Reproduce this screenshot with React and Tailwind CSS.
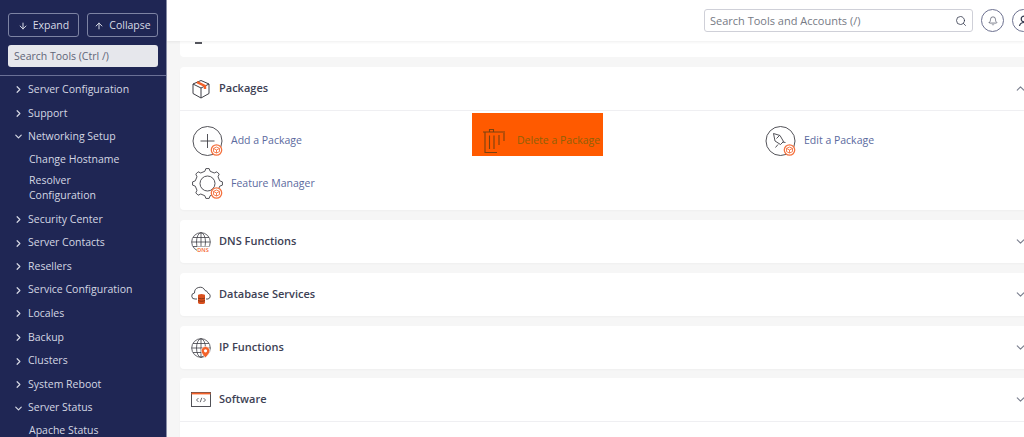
import React from "react";
import { ChevronRight, ChevronDown, ChevronUp, ArrowDown, ArrowUp, Search, Bell } from "lucide-react";

const D = "#3f3f46";
const O = "#f4622a";

function Badge({ x = 24, y = 24 }) {
  return (
    <g transform={`translate(${x} ${y})`} fill="none" stroke="#f4723f" strokeWidth="1.1">
      <circle r="5.2" fill="#fff" strokeWidth="1.3" />
      <path d="M-3 -1.6 0 -3 3 -1.6 3 1.6 0 3 -3 1.6Z M-3 -1.6 0 0 3 -1.6 M0 0V3" strokeWidth="0.9" />
    </g>
  );
}

function Svg({ children, size = 32, box = 32 }) {
  return (
    <svg width={size} height={size} viewBox={`0 0 ${box} ${box}`} fill="none" stroke={D} strokeWidth="0.9" className="shrink-0">
      {children}
    </svg>
  );
}

const AddIcon = () => (
  <Svg>
    <circle cx="15.5" cy="16" r="14.5" />
    <path d="M15.5 9v14M8.500 16h14" />
    <Badge x={24.5} y={25} />
  </Svg>
);

const TrashIcon = () => (
  <svg width="24" height="26" viewBox="0 0 24 26" fill="none" stroke="#7a4210" strokeWidth="1.1" className="shrink-0">
    <path d="M0 4h22M6.500 4V1.500h4V4" />
    <path d="M2 4v20.500h12" />
    <path d="M6.500 7.500v13.500M11 7.500v13.500M16 7v10M21 5v8" />
  </svg>
);

const EditIcon = () => (
  <Svg>
    <circle cx="15.5" cy="16" r="14.5" />
    <path d="M8.500 8.500l6.500 2 3.500 6-3 3-5.500-3.500z M11.500 13.500l3-3M13 19.500l-2.500 3M17.500 17l3 .5" />
    <Badge x={24.5} y={25} />
  </Svg>
);

function gearPath(cx, cy, r1, r2, n) {
  const pts = [];
  for (let i = 0; i < n; i++) {
    const a = (i / n) * Math.PI * 2;
    const s = Math.PI / n;
    [[-0.5, r1], [-0.25, r2], [0.25, r2], [0.5, r1]].forEach(([k, r]) => {
      const t = a + k * s * 1.1;
      pts.push(`${(cx + r * Math.cos(t)).toFixed(2)} ${(cy + r * Math.sin(t)).toFixed(2)}`);
    });
  }
  return "M" + pts.join("L") + "Z";
}

const GearIcon = () => (
  <Svg>
    <path d={gearPath(15.5, 15.5, 12.5, 15, 8)} strokeLinejoin="round" />
    <circle cx="15.5" cy="15.5" r="7.5" />
    <Badge x={24.5} y={25} />
  </Svg>
);

const BoxIcon = () => (
  <svg width="20" height="20" viewBox="0 0 20 20" fill="none" stroke={D} strokeWidth="1" className="shrink-0">
    <path d="M10 1.500 18 5v9.500l-8 4.500-8-4.500V5z" />
    <path d="M2 5l8 4 8-4M10 9v10" />
    <path d="M6 3.200 14 7v3" stroke={O} strokeWidth="2.400" />
  </svg>
);

const GlobeIcon = ({ children }) => (
  <svg width="20" height="20" viewBox="0 0 20 20" fill="none" stroke={D} strokeWidth="0.8" className="shrink-0">
    <circle cx="10" cy="10" r="9.300" />
    <ellipse cx="10" cy="10" rx="4.500" ry="9.300" />
    <path d="M10 .7v18.600M.7 10h18.600M2 5.500h16M2 14.500h16" />
    {children}
  </svg>
);

const CloudIcon = () => (
  <svg width="21" height="20" viewBox="0 0 21 20" fill="none" stroke={D} strokeWidth="0.9" className="shrink-0">
    <path d="M6 14H4a3 3 0 0 1-.5-6A5.500 5.500 0 0 1 14 5.500 3.500 3.500 0 0 1 17 8.200 3 3 0 0 1 17 14h-2" />
    <ellipse cx="10.500" cy="10.500" rx="3.500" ry="1.500" fill="#d9501e" stroke="none" />
    <rect x="7" y="10.500" width="7" height="7" fill="#d9501e" stroke="none" />
    <ellipse cx="10.500" cy="17.500" rx="3.500" ry="1.500" fill="#d9501e" stroke="none" />
    <path d="M7 13c2 1 5 1 7 0M7 15.500c2 1 5 1 7 0" stroke="#6b2a10" strokeWidth="0.7" />
  </svg>
);

const WindowIcon = () => (
  <svg width="20" height="20" viewBox="0 0 20 20" fill="none" stroke={D} strokeWidth="0.9" className="shrink-0">
    <rect x=".5" y="2.500" width="19" height="14" />
    <path d="M.5 3.500h19" stroke={O} strokeWidth="1.800" />
    <path d="M7.500 8 5.500 10l2 2M12.500 8l2 2-2 2M10.800 7.800 9.200 12.200" strokeWidth="0.8" />
  </svg>
);

const items = [
  ["Server Configuration", 0],
  ["Support", 0],
  ["Networking Setup", 1, ["Change Hostname", "Resolver Configuration"]],
  ["Security Center", 0],
  ["Server Contacts", 0],
  ["Resellers", 0],
  ["Service Configuration", 0],
  ["Locales", 0],
  ["Backup", 0],
  ["Clusters", 0],
  ["System Reboot", 0],
  ["Server Status", 1, ["Apache Status"]],
];

function Sidebar() {
  return (
    <aside className="w-[167px] shrink-0 h-full overflow-hidden bg-[#1f2654] border-r border-r-[#8a8fa8]">
      <div className="flex gap-2 px-2 pt-[13px]">
        <button className="flex-1 h-[24px] pt-[1px] flex items-center justify-center gap-[5px] rounded-[3px] border border-[#7d83a3] text-[10.5px] text-[#d8dbe6]">
          <ArrowDown size={10} strokeWidth={2.4} /> Expand
        </button>
        <button className="flex-1 h-[24px] pt-[1px] flex items-center justify-center gap-[5px] rounded-[3px] border border-[#7d83a3] text-[10.5px] text-[#d8dbe6]">
          <ArrowUp size={10} strokeWidth={2.4} /> Collapse
        </button>
      </div>
      <div className="mx-2 mt-[8px] h-[22px] pt-[1px] flex items-center rounded-[3px] bg-[#e6e7ec] px-[6px] text-[10.5px] text-[#5f6577]">
        Search Tools (Ctrl /)
      </div>
      <div className="mt-[8px] border-t border-t-[#6a7096] pt-[2px]">
        {items.map(([label, open, subs]) => (
          <div key={label}>
            <div className="h-[23.6px] flex items-center pl-[13px] gap-[4px] text-[10.5px] text-[#d4d7e3]">
              {open ? <ChevronDown size={11} strokeWidth={2.6} /> : <ChevronRight size={11} strokeWidth={2.6} />}
              <span>{label}</span>
            </div>
            {subs && (
              <div className="pt-[1px] pb-[1px]">
                {subs.map((s) => (
                  <div key={s} className="pl-[29px] pr-[37px] py-[2px] text-[10.5px] leading-[15px] text-[#d4d7e3] mb-[2px]">{s}</div>
                ))}
              </div>
            )}
          </div>
        ))}
      </div>
    </aside>
  );
}

function Header() {
  return (
    <header className="relative z-10 h-[41px] shrink-0 bg-white shadow-[0_1px_3px_rgba(0,0,0,0.07)] flex items-start justify-end gap-[8px] pt-[9px] overflow-hidden">
      <div className="w-[269px] h-[23px] pt-[1px] flex items-center justify-between rounded-[3px] border border-[#cfd0d8] px-[5px] text-[11px] text-[#767a85]">
        <span>Search Tools and Accounts (/)</span>
        <Search size={12} strokeWidth={1.6} className="text-[#33384d]" />
      </div>
      <div className="w-[23px] h-[23px] rounded-full border border-[#6d7190] flex items-center justify-center shrink-0">
        <Bell size={10} strokeWidth={1.5} className="text-[#33384d]" />
      </div>
      <div className="w-[23px] h-[23px] rounded-full border border-[#6d7190] flex items-center justify-center shrink-0 -mr-[11px]">
        <svg width="12" height="12" viewBox="0 0 12 12" fill="none" stroke="#33384d" strokeWidth="1.2">
          <circle cx="6" cy="4" r="2.8" />
          <path d="M1.500 11c.5-2.500 2-3.500 4.500-3.500s4 1 4.500 3.500" />
        </svg>
      </div>
    </header>
  );
}

function CardHeader({ icon, title, open, border }) {
  return (
    <div className={`flex items-center pl-[11px] ${border ? "border-b border-b-[#efeff2] h-[44px]" : "h-[43px]"}`}>
      <div className="w-[28px] flex justify-start">{icon}</div>
      <span className="text-[11px] font-semibold text-[#3d4154]">{title}</span>
      <span className="ml-auto text-[#7a7f8e] pr-[1px]">
        {open ? <ChevronUp size={13} strokeWidth={2} /> : <ChevronDown size={13} strokeWidth={2} />}
      </span>
    </div>
  );
}

const Tool = ({ icon, label, hl }) => (
  <div className="h-[43px] flex items-center">
    {hl ? (
      <div className="h-[43px] w-[131px] -ml-[6px] -mt-[12px] pl-[11px] pt-[12px] flex items-center gap-[10px] bg-[#ff5a00]">
        {icon}
        <span className="text-[10.5px] text-[#8f6008] whitespace-nowrap">{label}</span>
      </div>
    ) : (
      <div className="flex items-center gap-[7px]">
        {icon}
        <span className="text-[10.5px] text-[#5b6a9e] whitespace-nowrap">{label}</span>
      </div>
    )}
  </div>
);

const Card = ({ children, className = "mb-[10px]" }) => (
  <section className={`bg-white rounded-[4px] shadow-[0_1px_2px_rgba(0,0,0,0.03)] ${className}`}>{children}</section>
);

export default function App() {
  return (
    <div className="w-[1024px] h-[437px] overflow-hidden flex bg-[#f6f6f6] font-['Open_Sans',sans-serif]">
      <Sidebar />
      <div className="flex-1 min-w-0 flex flex-col h-full">
        <Header />
        <main className="flex-1 min-h-0 overflow-hidden pl-[13px]">
          <div className="w-[848px]">
            <section className="h-[16px] bg-white rounded-b-[4px] mb-[10px] pl-[15px] pt-[1px]">
              <div className="w-[7px] h-[2px] bg-[#55575f]" />
            </section>
            <Card>
              <CardHeader icon={<BoxIcon />} title="Packages" open border />
              <div className="h-[99px] pl-[12px] pt-[8px] grid grid-cols-[286px_287px_1fr] content-start">
                <Tool icon={<AddIcon />} label="Add a Package" />
                <Tool icon={<TrashIcon />} label="Delete a Package" hl />
                <Tool icon={<EditIcon />} label="Edit a Package" />
                <Tool icon={<GearIcon />} label="Feature Manager" />
              </div>
            </Card>
            <Card>
              <CardHeader title="DNS Functions" icon={
                <GlobeIcon>
                  <rect x="6" y="14.5" width="12" height="5.500" fill="#fff" stroke="none" />
                  <text x="12" y="19.5" textAnchor="middle" fontSize="5.5" fontWeight="600" fill={O} stroke="none" fontFamily="Open Sans">DNS</text>
                </GlobeIcon>} />
            </Card>
            <Card>
              <CardHeader title="Database Services" icon={<CloudIcon />} />
            </Card>
            <Card className="mb-[9px]">
              <CardHeader title="IP Functions" icon={
                <GlobeIcon>
                  <path d="M14.500 19.800c-2.600-3-4.300-4.800-4.300-7a4.300 4.300 0 0 1 8.600 0c0 2.200-1.700 4-4.300 7z" fill={O} stroke="#fff" strokeWidth="0.6" />
                  <circle cx="14.500" cy="12.800" r="1.600" fill="#fff" stroke="none" />
                </GlobeIcon>} />
            </Card>
            <Card>
              <CardHeader title="Software" icon={<WindowIcon />} border />
              <div className="h-[40px]" />
            </Card>
          </div>
        </main>
      </div>
    </div>
  );
}
